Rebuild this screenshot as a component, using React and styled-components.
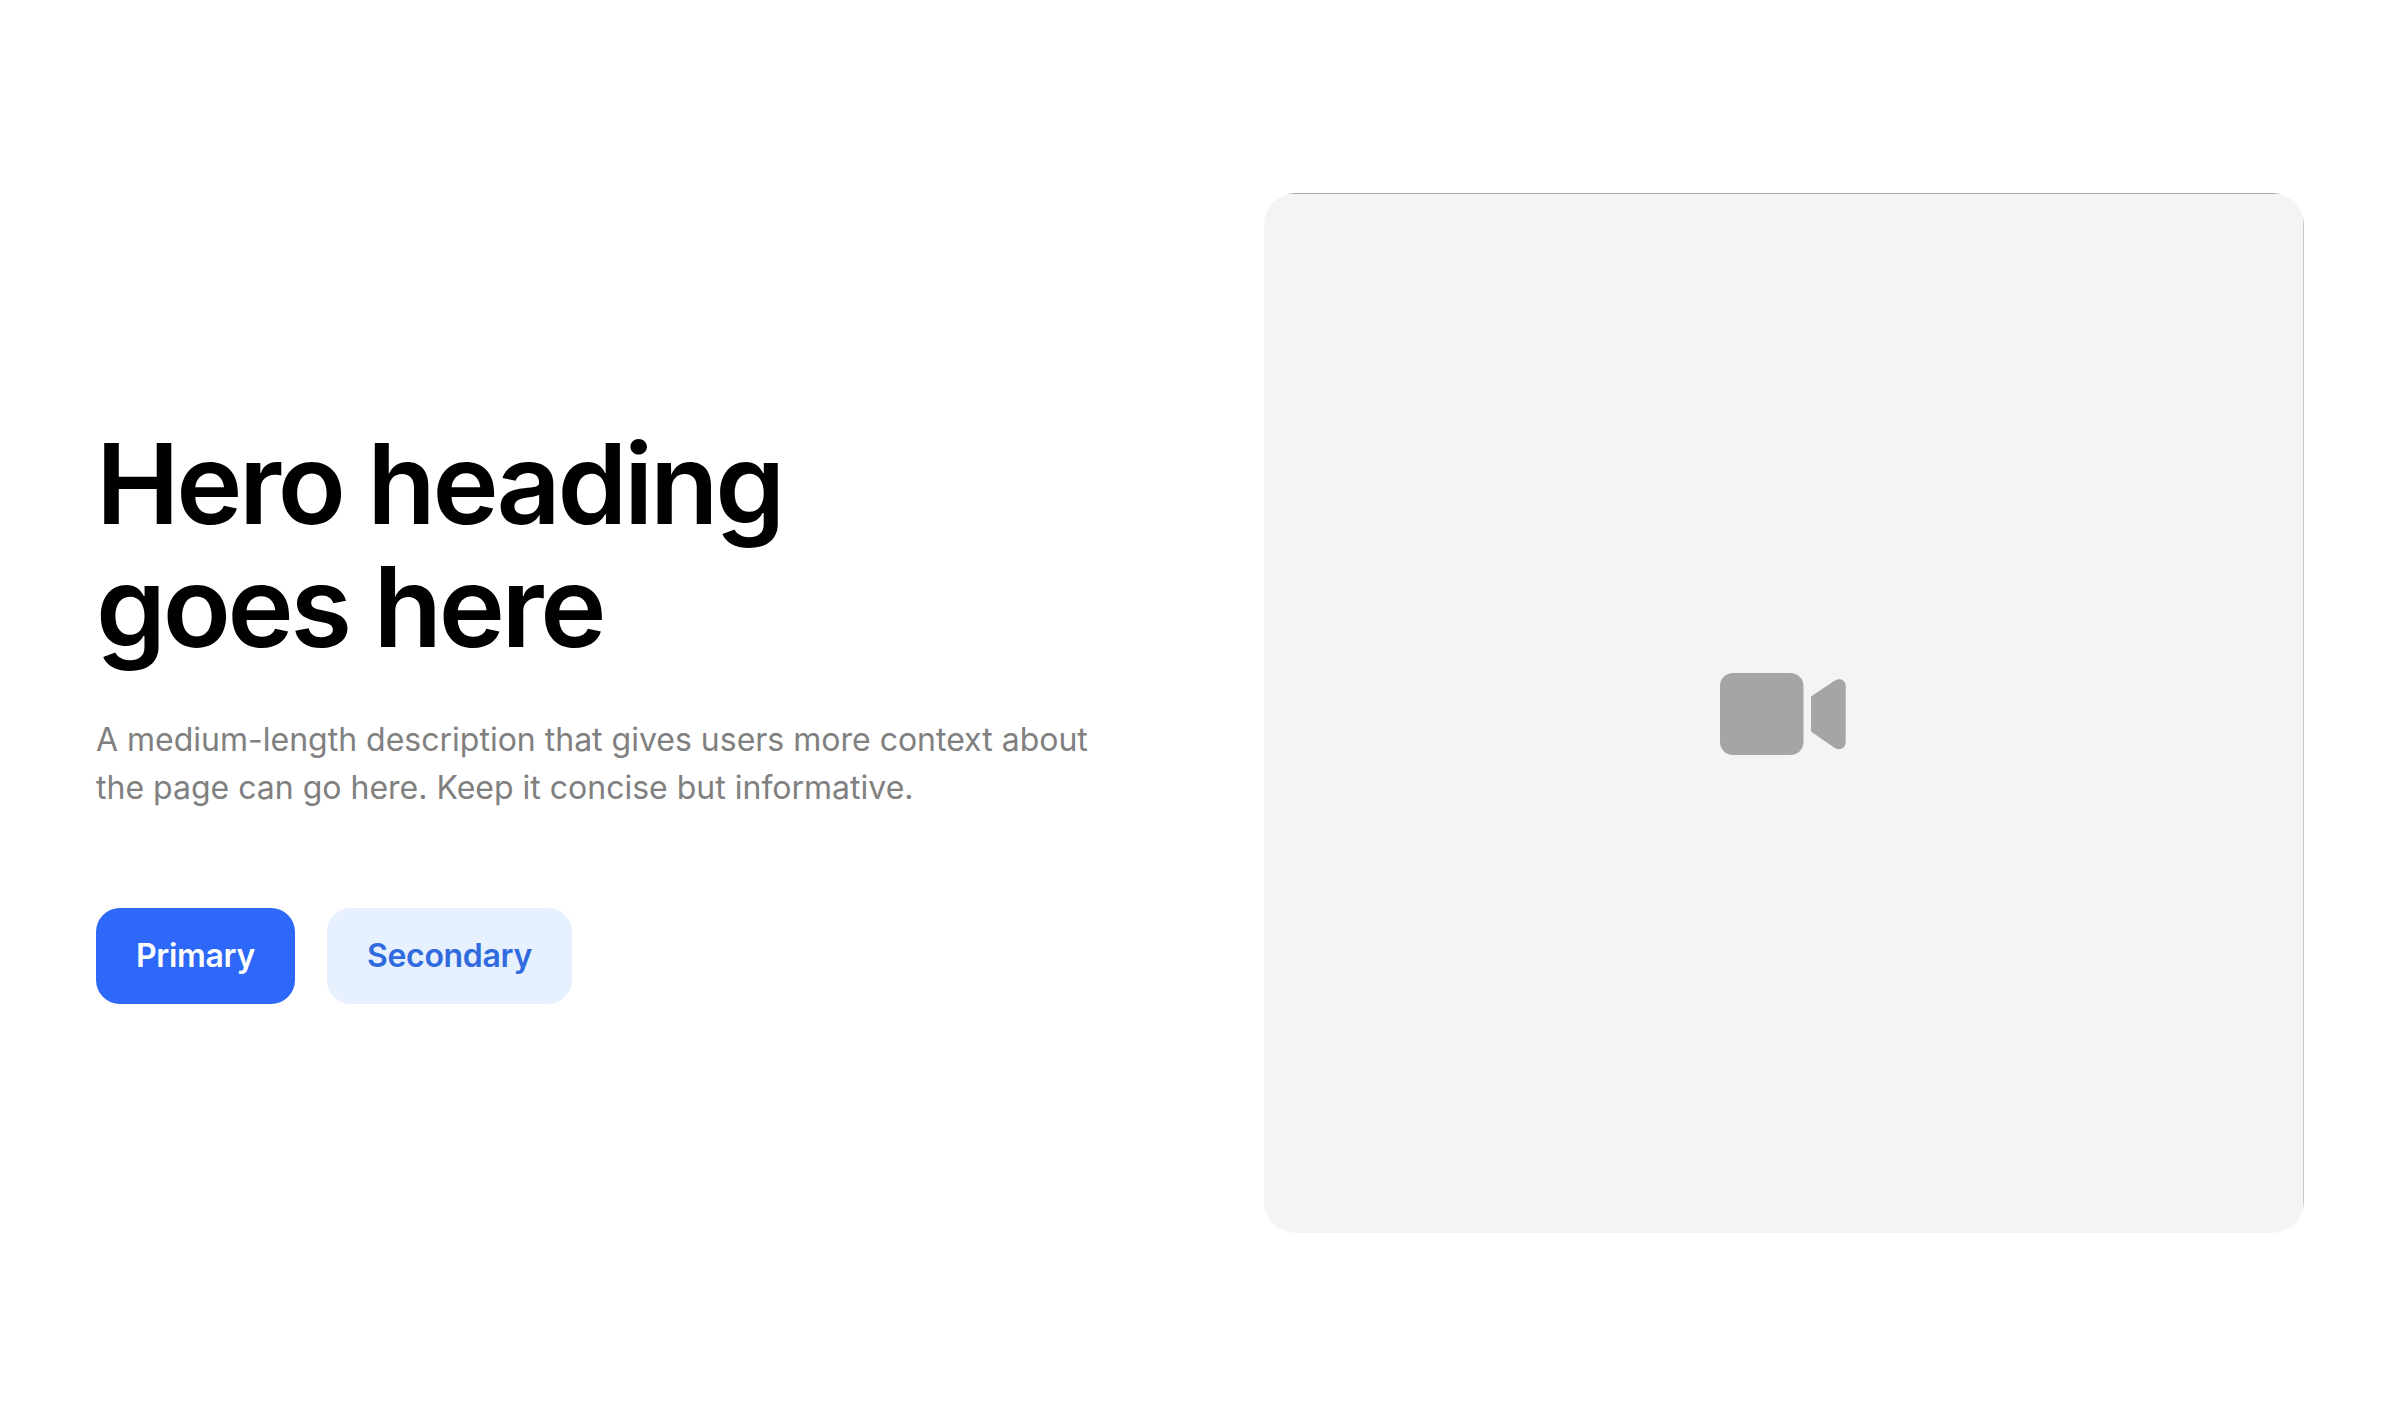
import styled, { createGlobalStyle } from "styled-components";

const GlobalStyle = createGlobalStyle`
  * {
    box-sizing: border-box;
  }

  body {
    margin: 0;
    background-color: #fff;
    font-family: Inter, sans-serif;
  }
`;

const HeroSection = styled.section`
  display: grid;
  grid-template-columns: 1fr 1fr;
  column-gap: 128px;
  align-items: center;
  height: 1424px;
  padding: 193px 96px 191px;
`;

const Content = styled.div`
  display: flex;
  flex-direction: column;
`;

const Heading = styled.h1`
  margin: 0 0 48px;
  color: #000;
  font-size: 112px;
  font-weight: 600;
  line-height: 1.1;
  letter-spacing: -0.03em;
`;

const Description = styled.p`
  margin: 0 0 96px;
  color: #808080;
  font-size: 32px;
  line-height: 1.5;
`;

const ButtonRow = styled.div`
  display: flex;
  gap: 32px;
`;

const Button = styled.button`
  height: 96px;
  padding: 0 40px 2px;
  border: none;
  border-radius: 24px;
  background-color: ${({ $secondary }) => ($secondary ? "#e6f0ff" : "#2d68f8")};
  color: ${({ $secondary }) => ($secondary ? "#306adf" : "#fff")};
  font-family: inherit;
  font-size: 32px;
  font-weight: 600;
  letter-spacing: -0.01em;
  cursor: pointer;
`;

const MediaPanel = styled.div`
  display: flex;
  align-items: center;
  justify-content: center;
  aspect-ratio: 1;
  border-radius: 32px;
  background:
    linear-gradient(#aaa, #aaa) center top / calc(100% - 44px) 1px no-repeat,
    linear-gradient(#c6c6c6, #c6c6c6) right center / 1px calc(100% - 44px) no-repeat,
    #f4f4f4;
`;

const VideoIcon = styled.svg`
  width: 128px;
  height: 86px;
  fill: #a4a6a3;
`;

export default function App() {
  return (
    <>
      <GlobalStyle />
      <HeroSection>
        <Content>
          <Heading>
            Hero heading
            <br />
            goes here
          </Heading>
          <Description>
            A medium-length description that gives users more context about
            <br />
            the page can go here. Keep it concise but informative.
          </Description>
          <ButtonRow>
            <Button>Primary</Button>
            <Button $secondary>Secondary</Button>
          </ButtonRow>
        </Content>
        <MediaPanel>
          <VideoIcon viewBox="0 0 128 86">
            <rect y="3" width="83.5" height="82" rx="13" />
            <path d="M91 26.5 L114 11 C119.5 7 125.7 10 125.7 16 V72 C125.7 78 119.5 81.5 114 77.5 L91 61.5 Z" />
          </VideoIcon>
        </MediaPanel>
      </HeroSection>
    </>
  );
}
